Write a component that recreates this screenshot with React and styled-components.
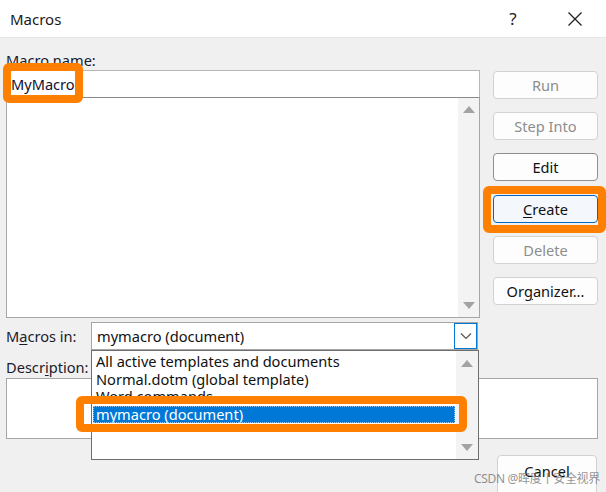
import React from "react";
import styled, { createGlobalStyle } from "styled-components";

const Global = createGlobalStyle`
  html, body { margin: 0; padding: 0; }
  body {
    width: 606px; height: 492px; overflow: hidden;
    background: #f0f0f0;
    font-family: "Noto Sans", "Open Sans", sans-serif;
    font-size: 14.6px; color: #111;
  }
`;

const Window = styled.div`
  position: relative;
  width: 606px; height: 492px;
  overflow: hidden;
  background: #f0f0f0;
`;

const TitleBar = styled.div`
  height: 37px;
  background: #fff;
  border-bottom: 1px solid #e6e6e6;
  display: flex; align-items: center;
  padding-left: 10px;
`;

const Title = styled.div`
  flex: 1;
  font-size: 15px;
  color: #1a1a1a;
`;

const TitleBtn = styled.div`
  width: 62px; height: 37px;
  display: flex; align-items: center; justify-content: center;
  font-size: 17px; color: #222;
`;

const Body = styled.div`
  padding: 12px 8px 0 6px;
  display: flex; flex-direction: column;
`;

const Top = styled.div`
  display: flex; gap: 13px;
`;

const LeftCol = styled.div`
  width: 474px;
  display: flex; flex-direction: column;
`;

const Label = styled.div`
  height: 20px; line-height: 20px;
  color: #1a1a2a;
  white-space: nowrap;
`;

const NameInput = styled.div`
  height: 26px;
  background: #fff;
  border: 1px solid #b8b8b8;
  border-bottom-color: #8a8a8a;
  display: flex; align-items: center;
  padding-left: 4px;
  color: #101030;
`;

const ListBox = styled.div`
  height: 219px;
  background: #fff;
  border: 1px solid #a6a6a6;
  border-top: none;
  display: flex; justify-content: flex-end;
`;

const ScrollBar = styled.div`
  width: 21px;
  background: #f3f3f3;
  display: flex; flex-direction: column; justify-content: space-between; align-items: center;
  padding: 8px 0;
`;

const Arrow = styled.div`
  width: 0; height: 0;
  border-left: 6px solid transparent;
  border-right: 6px solid transparent;
  ${(p) => (p.$down ? "border-top: 7px solid #a3a3a3;" : "border-bottom: 7px solid #a3a3a3;")}
`;

const RightCol = styled.div`
  width: 105px;
  padding-top: 21px;
  display: flex; flex-direction: column; gap: 13.2px;
`;

const Button = styled.div`
  height: 26px;
  border-radius: 4px;
  border: 1px solid ${(p) => (p.$primary ? "#0067c0" : p.$dark ? "#8f8f8f" : "#d2d2d2")};
  background: ${(p) => (p.$primary ? "#f4f8fd" : "#fdfdfd")};
  color: ${(p) => (p.$disabled ? "#8d8d8d" : "#111")};
  display: flex; align-items: center; justify-content: center;
  u { text-decoration: underline; text-underline-offset: 2px; }
`;

const Row = styled.div`
  display: flex; align-items: center;
  margin-top: 4px;
`;

const RowLabel = styled.div`
  width: 85px;
  color: #1a1a2a;
  white-space: nowrap;
  u { text-underline-offset: 2px; }
`;

const Combo = styled.div`
  box-sizing: border-box;
  width: 387px; height: 28px;
  background: #fff;
  border: 1px solid #a6a6a6;
  display: flex; align-items: center;
  padding-left: 5px;
`;

const ComboText = styled.div`
  flex: 1; color: #111;
`;

const ComboBtn = styled.div`
  width: 21px; height: 24px;
  border: 1px solid #0078d4;
  display: flex; align-items: center; justify-content: center;
  background: #fff;
`;

const DescLabel = styled.div`
  height: 22px; line-height: 22px;
  margin-top: 6px;
  color: #1a1a2a;
  u { text-underline-offset: 2px; }
`;

const DescBox = styled.div`
  height: 59px; width: 590px;
  background: #fff;
  border: 1px solid #a6a6a6;
`;

const Bottom = styled.div`
  display: flex; justify-content: flex-end;
  margin-top: 16px;
  padding-right: 1px;
`;

const CancelBtn = styled(Button)`
  width: 100px; height: 40px;
  align-items: flex-start; padding-top: 5px;
  box-sizing: border-box;
`;

const Dropdown = styled.div`
  position: absolute;
  left: 91px; top: 350px;
  width: 386px; height: 108px;
  background: #fff;
  border: 1px solid #6e6e6e;
  display: flex;
`;

const Items = styled.div`
  flex: 1;
  padding-top: 2px;
  padding-left: 1px;
`;

const Item = styled.div`
  height: 17.6px; line-height: 17px;
  padding-left: 3px;
  white-space: nowrap;
  color: ${(p) => (p.$sel ? "#fff" : "#111")};
  background: ${(p) => (p.$sel ? "#0078d7" : "transparent")};
  outline: ${(p) => (p.$sel ? "1px dotted #9fc8ee" : "none")};
  outline-offset: -1px;
  margin-right: ${(p) => (p.$sel ? "1px" : "0")};
`;

const DropScroll = styled(ScrollBar)`
  width: 22px;
  padding: 9px 0 8px;
`;

const Highlight = styled.div`
  position: absolute;
  border: 8px solid #ff8000;
  border-radius: 6px;
  box-sizing: border-box;
`;

const Watermark = styled.div`
  position: absolute;
  right: 6px; bottom: 5px;
  font-size: 12px;
  color: rgba(110, 110, 110, 0.75);
  font-family: "Noto Sans", "Noto Sans CJK SC", sans-serif;
  letter-spacing: -0.3px;
`;

const X = () => (
  <svg width="16" height="16" viewBox="0 0 16 16">
    <path d="M1.5 1.5 L14.5 14.5 M14.5 1.5 L1.5 14.5" stroke="#222" strokeWidth="1.3" />
  </svg>
);

const Chevron = () => (
  <svg width="12" height="8" viewBox="0 0 12 8">
    <path d="M1 1.5 L6 6.5 L11 1.5" fill="none" stroke="#555" strokeWidth="1.2" />
  </svg>
);

export default function App() {
  return (
    <Window>
      <Global />
      <TitleBar>
        <Title>Macros</Title>
        <TitleBtn>?</TitleBtn>
        <TitleBtn><X /></TitleBtn>
      </TitleBar>
      <Body>
        <Top>
          <LeftCol>
            <Label>Macro name:</Label>
            <NameInput>MyMacro</NameInput>
            <ListBox>
              <ScrollBar>
                <Arrow />
                <Arrow $down />
              </ScrollBar>
            </ListBox>
          </LeftCol>
          <RightCol>
            <Button $disabled>Run</Button>
            <Button $disabled>Step Into</Button>
            <Button $dark>Edit</Button>
            <Button $primary><span><u>C</u>reate</span></Button>
            <Button $disabled>Delete</Button>
            <Button><span>Or<u>g</u>anizer...</span></Button>
          </RightCol>
        </Top>
        <Row>
          <RowLabel>M<u>a</u>cros in:</RowLabel>
          <Combo>
            <ComboText>mymacro (document)</ComboText>
            <ComboBtn><Chevron /></ComboBtn>
          </Combo>
        </Row>
        <DescLabel>Descr<u>i</u>ption:</DescLabel>
        <DescBox />
        <Bottom>
          <CancelBtn>Cancel</CancelBtn>
        </Bottom>
      </Body>
      <Dropdown>
        <Items>
          <Item>All active templates and documents</Item>
          <Item>Normal.dotm (global template)</Item>
          <Item>Word commands</Item>
          <Item $sel>mymacro (document)</Item>
        </Items>
        <DropScroll>
          <Arrow />
          <Arrow $down />
        </DropScroll>
      </Dropdown>
      <Highlight style={{ left: 3, top: 63, width: 80, height: 40 }} />
      <Highlight style={{ left: 483, top: 186, width: 123, height: 47 }} />
      <Highlight style={{ left: 76, top: 396, width: 391, height: 36 }} />
      <Watermark>CSDN @晖度丨安全视界</Watermark>
    </Window>
  );
}
